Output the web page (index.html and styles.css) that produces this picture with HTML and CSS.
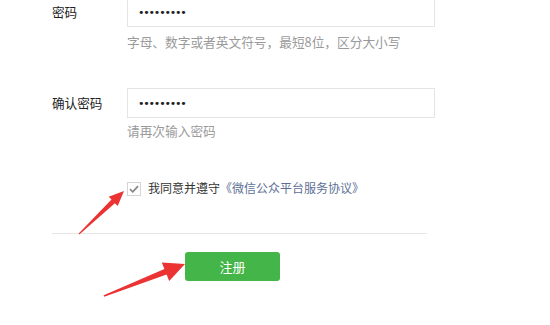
FILE: index.html
```html
<!DOCTYPE html>
<html lang="zh-CN">
<head>
<meta charset="utf-8">
<link rel="stylesheet" href="styles.css">
</head>
<body>
<div class="page">
  <form class="form">
    <div class="row row-first">
      <label class="label">密码</label>
      <div class="control">
        <input class="input" type="password" value="123456789">
        <div class="hint">字母、数字或者英文符号，最短8位，区分大小写</div>
      </div>
    </div>
    <div class="row row-second">
      <label class="label">确认密码</label>
      <div class="control">
        <input class="input" type="password" value="123456789">
        <div class="hint hint-second">请再次输入密码</div>
      </div>
    </div>
    <div class="agree">
      <span class="checkbox"><svg width="10" height="8" viewBox="0 0 10 8"><path d="M1 4.2 L3.8 6.8 L9 1.2" fill="none" stroke="#8a8a8a" stroke-width="1.8"/></svg></span>
      <span class="agree-text">我同意并遵守<a class="link">《微信公众平台服务协议》</a></span>
    </div>
    <div class="divider"></div>
    <div class="actions">
      <button type="button" class="btn">注册</button>
    </div>
  </form>
  <svg class="arrows" width="550" height="325" viewBox="0 0 550 325">
    <polygon fill="#ec3333" points="78.7,233.6 111.5,199.6 108.7,196.7 124,191 117.7,206.1 114.9,203.2 79.3,234.4"/>
    <polygon fill="#ec3333" points="103.7,295.3 164.4,268.9 161.8,262.4 185,264 169.2,281 166.6,274.5 104.3,296.7"/>
  </svg>
</div>
</body>
</html>
```

FILE: styles.css
```css
html, body {
  margin: 0;
  padding: 0;
  background: #ffffff;
}
body {
  font-family: "Noto Sans CJK SC", "Liberation Sans", sans-serif;
  font-size: 13px;
  color: #222222;
}
.page {
  position: relative;
  width: 550px;
  height: 325px;
  overflow: hidden;
}
.form {
  margin: 0;
  padding-left: 52px;
}
.row {
  display: flex;
  align-items: flex-start;
}
.row-first {
  margin-top: -3px;
}
.row-second {
  margin-top: 37px;
}
.label {
  width: 75px;
  line-height: 30px;
  font-size: 12.6px;
  color: #222222;
}
.control {
  display: flex;
  flex-direction: column;
}
.input {
  box-sizing: border-box;
  width: 308px;
  height: 30px;
  margin: 0;
  padding: 0 10px;
  border: 1px solid #e4e4e4;
  border-radius: 0;
  background: #ffffff;
  font-family: "DejaVu Sans", sans-serif;
  font-size: 11px;
  letter-spacing: -1.2px;
  color: #222222;
  outline: none;
}
.hint {
  margin-top: 6px;
  line-height: 18px;
  font-size: 12.7px;
  color: #9a9a9a;
}
.hint-second {
  margin-top: 4px;
}
.agree {
  display: flex;
  align-items: center;
  margin-top: 38px;
  margin-left: 75px;
  height: 20px;
}
.checkbox {
  box-sizing: border-box;
  width: 14px;
  height: 14px;
  border: 1px solid #d4d4d4;
  background: #ffffff;
  display: flex;
  align-items: center;
  justify-content: center;
  margin-top: 1px;
}
.agree-text {
  margin-left: 7px;
  line-height: 20px;
  font-size: 12px;
  color: #333333;
}
.link {
  color: #5d6f96;
}
.divider {
  margin-top: 35px;
  width: 375px;
  height: 1px;
  background: #e7e7e7;
}
.actions {
  margin-top: 18px;
  padding-left: 133px;
}
.btn {
  width: 95px;
  height: 29px;
  margin: 0;
  padding: 0;
  border: none;
  border-radius: 3px;
  background: #44b549;
  color: #ffffff;
  font-family: "Noto Sans CJK SC", sans-serif;
  font-size: 13px;
  display: block;
}
.arrows {
  position: absolute;
  left: 0;
  top: 0;
  pointer-events: none;
}
```
